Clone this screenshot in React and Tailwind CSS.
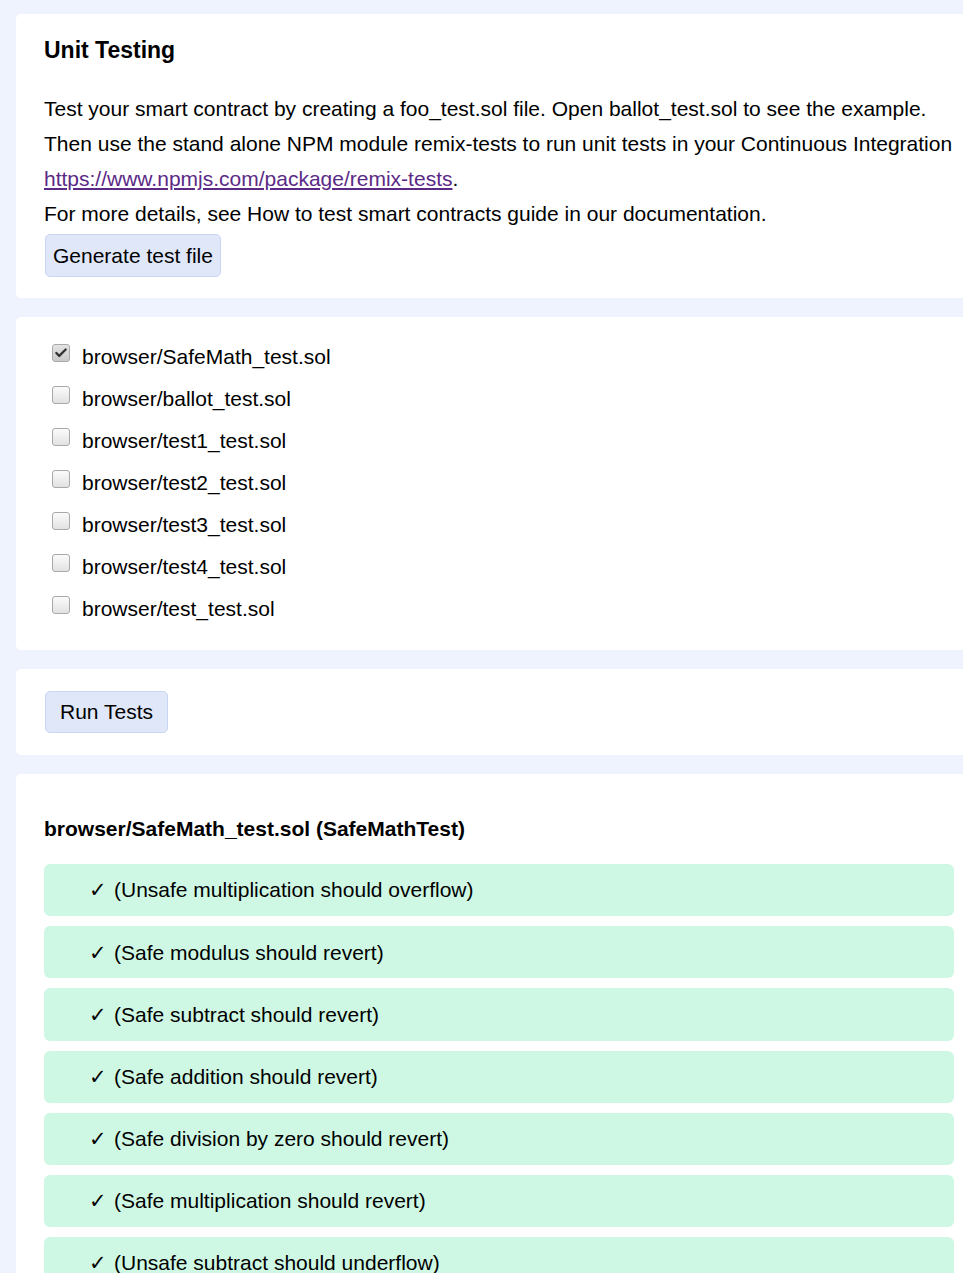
import { Check } from 'lucide-react'

const FILES = [
  { name: 'browser/SafeMath_test.sol', checked: true },
  { name: 'browser/ballot_test.sol' },
  { name: 'browser/test1_test.sol' },
  { name: 'browser/test2_test.sol' },
  { name: 'browser/test3_test.sol' },
  { name: 'browser/test4_test.sol' },
  { name: 'browser/test_test.sol' },
]

const RESULTS = [
  'Unsafe multiplication should overflow',
  'Safe modulus should revert',
  'Safe subtract should revert',
  'Safe addition should revert',
  'Safe division by zero should revert',
  'Safe multiplication should revert',
  'Unsafe subtract should underflow',
]

function Card({ className = '', children }) {
  return <div className={`w-[966px] bg-white rounded-[5px] px-7 ${className}`}>{children}</div>
}

function Button({ children, className = '' }) {
  return (
    <button className={`bg-[#dfe7f9] border border-[#c8d5f3] rounded-[5px] text-[21px] leading-[24px] text-black ${className}`}>
      {children}
    </button>
  )
}

function Box({ checked }) {
  return (
    <span
      className={`w-[18px] h-[18px] rounded-[3px] border border-[#a9a9a9] flex items-center justify-center shrink-0 ${
        checked ? 'bg-gradient-to-b from-[#e4e4e4] to-[#c9c9c9]' : 'bg-gradient-to-b from-[#fbfbfb] to-[#e2e2e2]'
      }`}
    >
      {checked && <Check size={14} strokeWidth={4} className="text-[#333]" />}
    </span>
  )
}

export default function App() {
  return (
    <div className="min-h-[1273px] bg-[#eef3fd] pl-4 pt-[14px] overflow-hidden font-['Liberation_Sans',Arial,sans-serif] text-black">
      <div className="flex flex-col gap-[19px]">
        <Card className="pt-[22px] pb-[21px]">
          <h1 className="text-[23px] font-bold leading-[28px]">Unit Testing</h1>
          <div className="mt-[27px] text-[21px] leading-[35px] whitespace-nowrap">
            <div>Test your smart contract by creating a foo_test.sol file. Open ballot_test.sol to see the example.</div>
            <div>Then use the stand alone NPM module remix-tests to run unit tests in your Continuous Integration</div>
            <div>
              <a href="#" className="text-[#5b2a86] underline decoration-[#5b2a86]">https://www.npmjs.com/package/remix-tests</a>.
            </div>
            <div>For more details, see How to test smart contracts guide in our documentation.</div>
          </div>
          <Button className="ml-px mt-[3px] h-[43px] px-[7px]">Generate test file</Button>
        </Card>

        <Card className="pt-[19px] pb-[20px]">
          <div className="flex flex-col">
            {FILES.map((f) => (
              <label key={f.name} className="h-[42px] flex items-center gap-[12px] pl-[8px] text-[21px]">
                <span className="-mt-[8px]">
                  <Box checked={f.checked} />
                </span>
                <span>{f.name}</span>
              </label>
            ))}
          </div>
        </Card>

        <Card className="pt-[22px] pb-[22px]">
          <Button className="ml-px h-[42px] px-[14px]">Run Tests</Button>
        </Card>

        <Card className="pt-[43px] pb-[40px]">
          <h2 className="text-[21px] font-bold leading-[24px]">browser/SafeMath_test.sol (SafeMathTest)</h2>
          <div className="mt-[23px] flex flex-col gap-[10px] w-[910px]">
            {RESULTS.map((r) => (
              <div key={r} className="h-[52.2px] bg-[#cff8e4] rounded-[6px] flex items-center pl-[45px] text-[21px]">
                <span className="mr-[7px]">✓</span>
                <span>({r})</span>
              </div>
            ))}
          </div>
        </Card>
      </div>
    </div>
  )
}
